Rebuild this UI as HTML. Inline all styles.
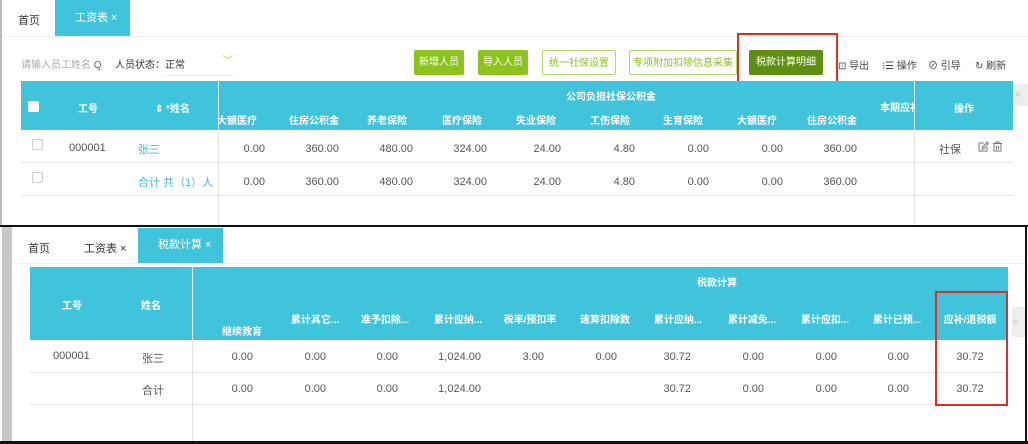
<!DOCTYPE html>
<html><head><meta charset="utf-8"><style>
*{margin:0;padding:0;box-sizing:border-box}
body{width:1028px;height:444px;overflow:hidden;background:#fff;position:relative;font-family:"Liberation Sans","Noto Sans CJK SC",sans-serif;font-size:11px;color:#555}
.a{position:absolute;white-space:nowrap}
.teal{background:#40c4dc}
.h{color:#fff;font-weight:bold;font-size:10px}
.btn{position:absolute;height:25px;line-height:25px;text-align:center;border-radius:2px;font-size:10px}
.r{text-align:right}
.c{text-align:center}
.line{position:absolute;background:#e6e6e6;height:1px}
</style></head><body>
<div class="a" style="left:0;top:0;width:2px;height:226px;background:#bbb"></div>
<div class="a" style="left:18px;top:12px;color:#333">首页</div>
<div class="a teal" style="left:55px;top:0;width:75px;height:36px;color:#fff;line-height:36px;padding-left:20px">工资表 ×</div>
<div class="line" style="left:2px;top:36px;width:1026px;background:#f0f0f0"></div>
<div class="a" style="left:21px;top:56px;color:#aaa;font-size:10px">请输入员工姓名 <span style="color:#666">Q</span></div>
<div class="a" style="left:115px;top:56px;color:#333;font-size:10px">人员状态：正常</div>
<div class="a" style="left:222px;top:52px;color:#a5cf4d">﹀</div>
<div class="line" style="left:163px;top:75px;width:72px;background:#eee"></div>
<div class="btn" style="left:414px;top:50px;width:50px;background:#8dc21f;color:#fff">新增人员</div>
<div class="btn" style="left:478px;top:50px;width:50px;background:#8dc21f;color:#fff">导入人员</div>
<div class="btn" style="left:542px;top:50px;width:74px;border:1px solid #b5d86a;color:#8dc21f">统一社保设置</div>
<div class="btn" style="left:629px;top:50px;width:108px;border:1px solid #b5d86a;color:#8dc21f">专项附加扣除信息采集</div>
<div class="btn" style="left:749px;top:50px;width:74px;background:#5f8f10;color:#fff">税款计算明细</div>
<div class="a" style="left:737px;top:33px;width:101px;height:51px;border:2px solid #d9302a"></div>
<div class="a" style="left:838px;top:57px;color:#444;font-size:10px">⊡ 导出</div>
<div class="a" style="left:882px;top:57px;color:#444;font-size:10px">⁝☰ 操作</div>
<div class="a" style="left:928px;top:57px;color:#444;font-size:10px">⊘ 引导</div>
<div class="a" style="left:975px;top:57px;color:#444;font-size:10px">↻ 刷新</div>
<div class="a teal" style="left:21px;top:81px;width:992px;height:49px"></div>
<div class="a" style="left:1015px;top:84px;width:13px;height:22px;background:#eee;color:#bbb;font-size:10px;line-height:22px">»</div>
<div class="a" style="left:28px;top:101px;width:11px;height:11px;background:#fff;border-radius:2px"></div>
<div class="a h" style="left:78px;top:100px">工号</div>
<div class="a h" style="left:155px;top:100px">⇕ *姓名</div>
<div class="a h" style="left:566px;top:88px">公司负担社保公积金</div>
<div class="a h" style="left:217px;top:112px">大额医疗</div>
<div class="a h" style="left:289px;top:112px">住房公积金</div>
<div class="a h" style="left:367px;top:112px">养老保险</div>
<div class="a h" style="left:442px;top:112px">医疗保险</div>
<div class="a h" style="left:516px;top:112px">失业保险</div>
<div class="a h" style="left:590px;top:112px">工伤保险</div>
<div class="a h" style="left:663px;top:112px">生育保险</div>
<div class="a h" style="left:737px;top:112px">大额医疗</div>
<div class="a h" style="left:807px;top:112px">住房公积金</div>
<div class="a h" style="left:880px;top:99px;width:34px;overflow:hidden">本期应补</div>
<div class="a h" style="left:954px;top:100px">操作</div>
<div class="a" style="left:218px;top:81px;width:1px;height:145px;background:#e4e4e4"></div>
<div class="a" style="left:914px;top:81px;width:1px;height:145px;background:#e4e4e4"></div>
<div class="line" style="left:21px;top:162px;width:992px"></div>
<div class="line" style="left:21px;top:195px;width:992px"></div>
<div class="a" style="left:32px;top:139px;width:11px;height:11px;border:1px solid #ccc;border-radius:2px"></div>
<div class="a" style="left:32px;top:172px;width:11px;height:11px;border:1px solid #ccc;border-radius:2px"></div>
<div class="a" style="left:69px;top:142px">000001</div>
<div class="a" style="left:138px;top:141px;color:#40bdd0">张三</div>
<div class="a" style="left:138px;top:174px;color:#40bdd0">合计 共（1）人</div>
<div class="a r" style="left:205px;top:143px;width:60px">0.00</div>
<div class="a r" style="left:279px;top:143px;width:60px">360.00</div>
<div class="a r" style="left:353px;top:143px;width:60px">480.00</div>
<div class="a r" style="left:427px;top:143px;width:60px">324.00</div>
<div class="a r" style="left:501px;top:143px;width:60px">24.00</div>
<div class="a r" style="left:575px;top:143px;width:60px">4.80</div>
<div class="a r" style="left:649px;top:143px;width:60px">0.00</div>
<div class="a r" style="left:723px;top:143px;width:60px">0.00</div>
<div class="a r" style="left:797px;top:143px;width:60px">360.00</div>
<div class="a" style="left:939px;top:141px">社保</div>
<svg class="a" style="left:978px;top:141px" width="26" height="11" viewBox="0 0 26 11" fill="none" stroke="#777" stroke-width="1"><path d="M1 2h5M1 2v8h8V6M4 7l5-6 1.5 1.5-5 5.5H4z"/><path d="M15 2.5h9M18 2.5V1h3v1.5M16 3v7h7V3M18.5 5v3.5M20.5 5v3.5"/></svg>
<div class="a r" style="left:205px;top:176px;width:60px">0.00</div>
<div class="a r" style="left:279px;top:176px;width:60px">360.00</div>
<div class="a r" style="left:353px;top:176px;width:60px">480.00</div>
<div class="a r" style="left:427px;top:176px;width:60px">324.00</div>
<div class="a r" style="left:501px;top:176px;width:60px">24.00</div>
<div class="a r" style="left:575px;top:176px;width:60px">4.80</div>
<div class="a r" style="left:649px;top:176px;width:60px">0.00</div>
<div class="a r" style="left:723px;top:176px;width:60px">0.00</div>
<div class="a r" style="left:797px;top:176px;width:60px">360.00</div>
<div class="a" style="left:0;top:225px;width:1028px;height:2px;background:#111"></div>
<div class="a" style="left:1025px;top:225px;width:2px;height:219px;background:#111"></div>
<div class="a" style="left:0;top:441px;width:1028px;height:3px;background:#111"></div>
<div class="a" style="left:2px;top:227px;width:10px;height:214px;background:#c8c8c8"></div>
<div class="a" style="left:28px;top:240px;color:#333">首页</div>
<div class="a" style="left:84px;top:240px;color:#333">工资表 ×</div>
<div class="a teal" style="left:138px;top:228px;width:85px;height:35px;color:#fff;line-height:35px;padding-left:20px">税款计算 ×</div>
<div class="line" style="left:12px;top:263px;width:1013px;background:#f0f0f0"></div>
<div class="a teal" style="left:30px;top:267px;width:978px;height:73px"></div>
<div class="a" style="left:1012px;top:307px;width:13px;height:30px;background:#eee;color:#bbb;font-size:10px;line-height:30px">»</div>
<div class="a" style="left:192px;top:267px;width:1px;height:174px;background:#e4e4e4"></div>
<div class="a h" style="left:62px;top:297px">工号</div>
<div class="a h" style="left:141px;top:297px">姓名</div>
<div class="a h" style="left:697px;top:274px">税款计算</div>
<div class="a h c" style="left:207px;top:323px;width:70px">继续教育</div>
<div class="a h c" style="left:280px;top:311px;width:70px">累计其它...</div>
<div class="a h c" style="left:350px;top:311px;width:70px">准予扣除...</div>
<div class="a h c" style="left:423px;top:311px;width:70px">累计应纳...</div>
<div class="a h c" style="left:495px;top:311px;width:70px">税率/预扣率</div>
<div class="a h c" style="left:570px;top:311px;width:70px">速算扣除数</div>
<div class="a h c" style="left:643px;top:311px;width:70px">累计应纳...</div>
<div class="a h c" style="left:717px;top:311px;width:70px">累计减免...</div>
<div class="a h c" style="left:790px;top:311px;width:70px">累计应扣...</div>
<div class="a h c" style="left:862px;top:311px;width:70px">累计已预...</div>
<div class="a h c" style="left:935px;top:311px;width:70px">应补/退税额</div>
<div class="line" style="left:30px;top:372px;width:978px"></div>
<div class="line" style="left:30px;top:404px;width:978px"></div>
<div class="a" style="left:53px;top:350px">000001</div>
<div class="a" style="left:142px;top:350px">张三</div>
<div class="a" style="left:142px;top:382px">合计</div>
<div class="a r" style="left:193px;top:351px;width:60px">0.00</div>
<div class="a r" style="left:266px;top:351px;width:60px">0.00</div>
<div class="a r" style="left:338px;top:351px;width:60px">0.00</div>
<div class="a r" style="left:411px;top:351px;width:70px">1,024.00</div>
<div class="a r" style="left:484px;top:351px;width:60px">3.00</div>
<div class="a r" style="left:557px;top:351px;width:60px">0.00</div>
<div class="a r" style="left:631px;top:351px;width:60px">30.72</div>
<div class="a r" style="left:704px;top:351px;width:60px">0.00</div>
<div class="a r" style="left:777px;top:351px;width:60px">0.00</div>
<div class="a r" style="left:849px;top:351px;width:60px">0.00</div>
<div class="a c" style="left:940px;top:351px;width:60px">30.72</div>
<div class="a r" style="left:193px;top:383px;width:60px">0.00</div>
<div class="a r" style="left:266px;top:383px;width:60px">0.00</div>
<div class="a r" style="left:338px;top:383px;width:60px">0.00</div>
<div class="a r" style="left:411px;top:383px;width:70px">1,024.00</div>
<div class="a r" style="left:631px;top:383px;width:60px">30.72</div>
<div class="a r" style="left:704px;top:383px;width:60px">0.00</div>
<div class="a r" style="left:777px;top:383px;width:60px">0.00</div>
<div class="a r" style="left:849px;top:383px;width:60px">0.00</div>
<div class="a c" style="left:940px;top:383px;width:60px">30.72</div>
<div class="a" style="left:935px;top:291px;width:73px;height:115px;border:2px solid #d9302a"></div>
</body></html>
